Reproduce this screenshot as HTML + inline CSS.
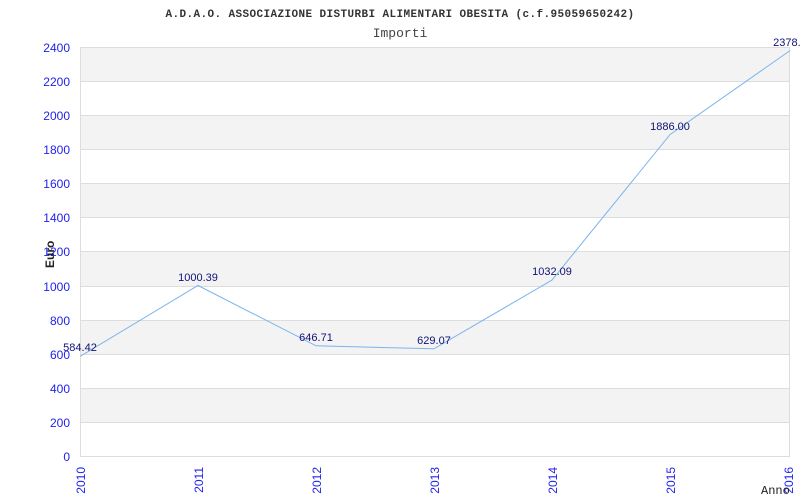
<!DOCTYPE html>
<html><head><style>body{margin:0;background:#fff}svg{display:block}</style></head><body>
<svg width="800" height="500" xmlns="http://www.w3.org/2000/svg" font-family="Liberation Sans, sans-serif">
<rect width="800" height="500" fill="#fff"/>
<g fill="#f3f3f3">
<rect x="80" y="47" width="710" height="34"/><rect x="80" y="115" width="710" height="34"/><rect x="80" y="183" width="710" height="34"/><rect x="80" y="251" width="710" height="35"/><rect x="80" y="320" width="710" height="34"/><rect x="80" y="388" width="710" height="34"/>
</g>
<g stroke="#dddddd" stroke-width="1">
<line x1="80" x2="790" y1="47.5" y2="47.5"/><line x1="80" x2="790" y1="81.5" y2="81.5"/><line x1="80" x2="790" y1="115.5" y2="115.5"/><line x1="80" x2="790" y1="149.5" y2="149.5"/><line x1="80" x2="790" y1="183.5" y2="183.5"/><line x1="80" x2="790" y1="217.5" y2="217.5"/><line x1="80" x2="790" y1="251.5" y2="251.5"/><line x1="80" x2="790" y1="286.5" y2="286.5"/><line x1="80" x2="790" y1="320.5" y2="320.5"/><line x1="80" x2="790" y1="354.5" y2="354.5"/><line x1="80" x2="790" y1="388.5" y2="388.5"/><line x1="80" x2="790" y1="422.5" y2="422.5"/><line x1="80" x2="790" y1="456.5" y2="456.5"/>
<line x1="80.5" x2="80.5" y1="47" y2="456"/><line x1="789.5" x2="789.5" y1="47" y2="456"/>
</g>
<text x="400" y="17" text-anchor="middle" font-family="Liberation Mono, monospace" font-weight="bold" font-size="11" letter-spacing="0.4" fill="#333">A.D.A.O. ASSOCIAZIONE DISTURBI ALIMENTARI OBESITA (c.f.95059650242)</text>
<text x="400" y="37" text-anchor="middle" font-family="Liberation Mono, monospace" font-size="13" fill="#444">Importi</text>
<g fill="#2222ee" font-size="12" text-anchor="end">
<text x="70" y="52">2400</text><text x="70" y="86">2200</text><text x="70" y="120">2000</text><text x="70" y="154">1800</text><text x="70" y="188">1600</text><text x="70" y="222">1400</text><text x="70" y="256">1200</text><text x="70" y="291">1000</text><text x="70" y="325">800</text><text x="70" y="359">600</text><text x="70" y="393">400</text><text x="70" y="427">200</text><text x="70" y="461">0</text>
</g>
<g fill="#2222ee" font-size="12" text-anchor="end">
<text transform="translate(85,467) rotate(-90)">2010</text><text transform="translate(203,467) rotate(-90)">2011</text><text transform="translate(321,467) rotate(-90)">2012</text><text transform="translate(439,467) rotate(-90)">2013</text><text transform="translate(557,467) rotate(-90)">2014</text><text transform="translate(675,467) rotate(-90)">2015</text><text transform="translate(793,467) rotate(-90)">2016</text>
</g>
<text transform="translate(54,268) rotate(-90)" font-size="12" font-weight="bold" fill="#222">Euro</text>
<text x="761" y="494" font-family="Liberation Mono, monospace" font-size="12" fill="#222">Anno</text>
<polyline fill="none" stroke="#7ab4ee" stroke-width="1" points="80,356.4 198,285.5 316,345.8 434,348.8 552,280.1 670,134.6 790,50.6"/>
<g fill="#111177" font-size="11" text-anchor="middle">
<text x="80" y="351">584.42</text><text x="198" y="281">1000.39</text><text x="316" y="341">646.71</text><text x="434" y="344">629.07</text><text x="552" y="275">1032.09</text><text x="670" y="130">1886.00</text><text x="790" y="46">2378.6</text>
</g>
</svg>
</body></html>
